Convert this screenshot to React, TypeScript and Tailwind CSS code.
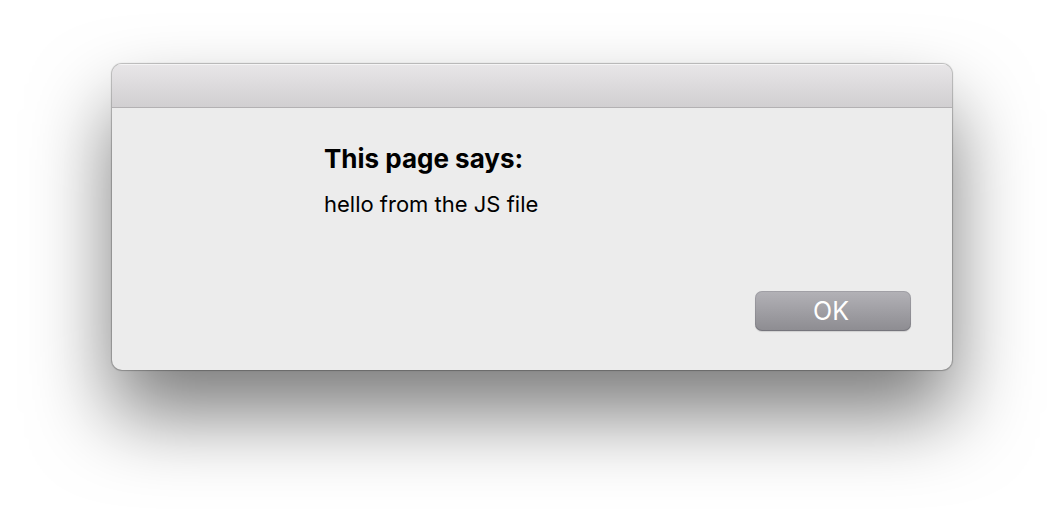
export default function App() {
  return (
    <main className="flex min-h-screen items-start justify-center bg-white px-28 pt-16 pb-40 font-['Inter','Liberation_Sans',sans-serif] text-black">
      <section
        role="alertdialog"
        aria-modal="true"
        aria-labelledby="dialog-title"
        aria-describedby="dialog-message"
        className="w-full overflow-hidden rounded-[10px] bg-[#ececec] shadow-[0_0_1px_1px_rgba(0,0,0,0.25),0_44px_80px_rgba(0,0,0,0.52)]"
      >
        <div className="h-11 border-b border-[#b3b1b3] bg-linear-to-b from-[#e8e6e8] to-[#d1cfd1] shadow-[inset_0_1px_0_#f5f4f5]" />
        <div className="flex flex-col pt-8 pr-[41px] pb-[39px] pl-53">
          <h1 id="dialog-title" className="text-[26px] leading-[38px] font-bold">
            This page says:
          </h1>
          <p id="dialog-message" className="mt-2.5 text-[22px] leading-8">
            hello from the JS file
          </p>
          <button
            type="button"
            className="mt-[71px] h-10 w-39 self-end rounded-[7px] bg-linear-to-b from-[#b3b2b7] to-[#8d8c91] pr-1 text-[25px] leading-8 text-white shadow-[inset_0_0_0_1px_rgba(90,88,100,0.2),inset_0_-1px_0_rgba(90,88,100,0.3),0_1px_1px_rgba(0,0,0,0.12)]"
          >
            OK
          </button>
        </div>
      </section>
    </main>
  );
}
